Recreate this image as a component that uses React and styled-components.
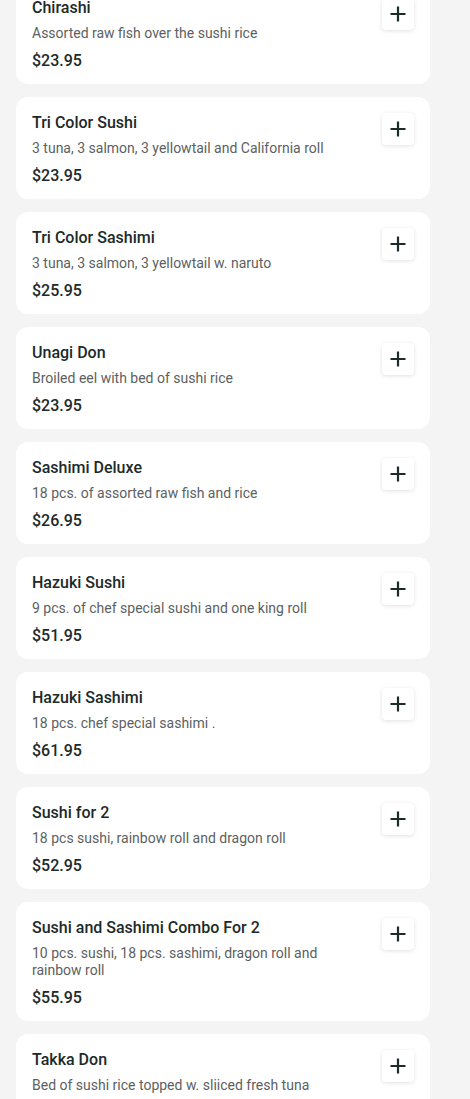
import styled, { createGlobalStyle } from "styled-components";

const GlobalStyle = createGlobalStyle`
  html, body {
    margin: 0;
    padding: 0;
    background: #f4f4f4;
    font-family: Roboto, "Liberation Sans", sans-serif;
    overflow: hidden;
  }
`;

const Page = styled.div`
  display: flex;
  flex-direction: column;
  gap: 13px;
  padding: 0 40px 0 16px;
  margin-top: -18px;
`;

const Card = styled.div`
  display: flex;
  align-items: flex-start;
  gap: 16px;
  background: #ffffff;
  border-radius: 12px;
  padding: 16px 16px 13px;
`;

const Info = styled.div`
  flex: 1;
  display: flex;
  flex-direction: column;
`;

const Title = styled.div`
  font-size: 16px;
  line-height: 20px;
  font-weight: 500;
  color: #1c2a2a;
`;

const Desc = styled.div`
  margin-top: 7px;
  font-size: 14px;
  line-height: 17px;
  color: #5c5f62;
  padding-right: ${(p) => (p.$narrow ? "20px" : "0")};
`;

const Price = styled.div`
  margin-top: 9px;
  font-size: 16px;
  line-height: 20px;
  font-weight: 500;
  color: #1c2a2a;
`;

const AddButton = styled.button`
  flex: none;
  width: 32px;
  height: 32px;
  border: none;
  border-radius: 4px;
  background: #ffffff;
  box-shadow: 0 1px 4px rgba(0, 0, 0, 0.12);
  display: flex;
  align-items: center;
  justify-content: center;
  padding: 0;
  cursor: pointer;
  color: #1c2a2a;
`;

const items = [
  { name: "Chirashi", desc: "Assorted raw fish over the sushi rice", price: "$23.95" },
  { name: "Tri Color Sushi", desc: "3 tuna, 3 salmon, 3 yellowtail and California roll", price: "$23.95" },
  { name: "Tri Color Sashimi", desc: "3 tuna, 3 salmon, 3 yellowtail w. naruto", price: "$25.95" },
  { name: "Unagi Don", desc: "Broiled eel with bed of sushi rice", price: "$23.95" },
  { name: "Sashimi Deluxe", desc: "18 pcs. of assorted raw fish and rice", price: "$26.95" },
  { name: "Hazuki Sushi", desc: "9 pcs. of chef special sushi and one king roll", price: "$51.95" },
  { name: "Hazuki Sashimi", desc: "18 pcs. chef special sashimi .", price: "$61.95" },
  { name: "Sushi for 2", desc: "18 pcs sushi, rainbow roll and dragon roll", price: "$52.95" },
  { name: "Sushi and Sashimi Combo For 2", desc: "10 pcs. sushi, 18 pcs. sashimi, dragon roll and rainbow roll", price: "$55.95", narrow: true },
  { name: "Takka Don", desc: "Bed of sushi rice topped w. sliiced fresh tuna", price: "$23.95" },
];

function PlusIcon() {
  return (
    <svg width="18" height="18" viewBox="0 0 18 18" fill="none">
      <path d="M9 1.5v15M1.5 9h15" stroke="currentColor" strokeWidth="2.2" />
    </svg>
  );
}

export default function App() {
  return (
    <>
      <GlobalStyle />
      <Page>
        {items.map((item) => (
          <Card key={item.name}>
            <Info>
              <Title>{item.name}</Title>
              <Desc $narrow={item.narrow}>{item.desc}</Desc>
              <Price>{item.price}</Price>
            </Info>
            <AddButton aria-label={`Add ${item.name}`}>
              <PlusIcon />
            </AddButton>
          </Card>
        ))}
      </Page>
    </>
  );
}
